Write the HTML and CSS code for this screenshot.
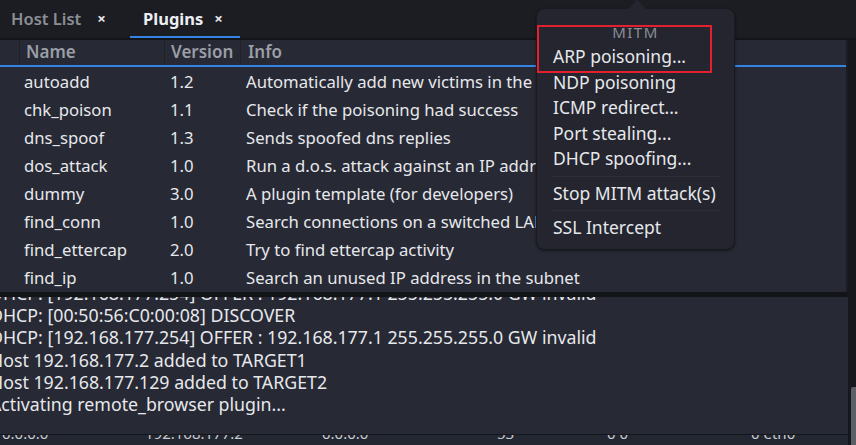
FILE: index.html
```html
<!DOCTYPE html>
<html>
<head>
<meta charset="utf-8">
<link rel="stylesheet" href="styles.css">
</head>
<body>
<div class="app">
  <div class="tabs">
    <div class="tab"><span class="tab-label">Host List</span><span class="tab-close">×</span></div>
    <div class="tab active"><span class="tab-label">Plugins</span><span class="tab-close">×</span></div>
  </div>
  <div class="sep-top"></div>
  <div class="main">
    <div class="content">
      <div class="plugins">
        <div class="thead">
          <div class="c0"></div>
          <div class="c1">Name</div>
          <div class="c2">Version</div>
          <div class="c3">Info</div>
        </div>
        <div class="tbody">
          <div class="row"><span class="c1">autoadd</span><span class="c2">1.2</span><span class="c3">Automatically add new victims in the target range</span></div>
          <div class="row"><span class="c1">chk_poison</span><span class="c2">1.1</span><span class="c3">Check if the poisoning had success</span></div>
          <div class="row"><span class="c1">dns_spoof</span><span class="c2">1.3</span><span class="c3">Sends spoofed dns replies</span></div>
          <div class="row"><span class="c1">dos_attack</span><span class="c2">1.0</span><span class="c3">Run a d.o.s. attack against an IP address</span></div>
          <div class="row"><span class="c1">dummy</span><span class="c2">3.0</span><span class="c3">A plugin template (for developers)</span></div>
          <div class="row"><span class="c1">find_conn</span><span class="c2">1.0</span><span class="c3">Search connections on a switched LAN</span></div>
          <div class="row"><span class="c1">find_ettercap</span><span class="c2">2.0</span><span class="c3">Try to find ettercap activity</span></div>
          <div class="row"><span class="c1">find_ip</span><span class="c2">1.0</span><span class="c3">Search an unused IP address in the subnet</span></div>
        </div>
      </div>
      <div class="sep-mid"></div>
      <div class="log">
        <div class="log-lines">
          <div>DHCP: [192.168.177.254] OFFER : 192.168.177.1 255.255.255.0 GW invalid</div>
          <div>DHCP: [00:50:56:C0:00:08] DISCOVER</div>
          <div>DHCP: [192.168.177.254] OFFER : 192.168.177.1 255.255.255.0 GW invalid</div>
          <div>Host 192.168.177.2 added to TARGET1</div>
          <div>Host 192.168.177.129 added to TARGET2</div>
          <div>Activating remote_browser plugin...</div>
        </div>
      </div>
      <div class="bottom">
        <span class="b1">0.0.0.0</span><span class="b2">192.168.177.2</span><span class="b3">0.0.0.0</span><span class="b4">53</span><span class="b5">0 0</span><span class="b6">0 eth0</span>
      </div>
    </div>
    <div class="rail"><div class="thumb"></div></div>
  </div>

  <div class="menu">
    <div class="menu-arrow"></div>
    <div class="menu-title">MITM</div>
    <div class="menu-item">ARP poisoning...</div>
    <div class="menu-item">NDP poisoning</div>
    <div class="menu-item">ICMP redirect...</div>
    <div class="menu-item">Port stealing...</div>
    <div class="menu-item">DHCP spoofing...</div>
    <div class="menu-sep"></div>
    <div class="menu-item">Stop MITM attack(s)</div>
    <div class="menu-sep"></div>
    <div class="menu-item">SSL Intercept</div>
    <div class="highlight"></div>
  </div>
</div>
</body>
</html>
```

FILE: styles.css
```css
* { box-sizing: border-box; }
html, body { margin: 0; padding: 0; }
body {
  width: 856px;
  height: 445px;
  overflow: hidden;
  background: #1c1d22;
  font-family: "Noto Sans", "DejaVu Sans", sans-serif;
  font-size: 16.7px;
  color: #e6e8ec;
}
.app {
  position: relative;
  width: 856px;
  height: 445px;
  display: flex;
  flex-direction: column;
}
.tabs {
  height: 38px;
  background: #1c1d22;
  display: flex;
  align-items: stretch;
}
.tab {
  display: flex;
  align-items: center;
  height: 38px;
  padding-bottom: 2px;
}
.tab:first-child { padding-left: 11px; width: 130px; }
.tab.active {
  width: 110px;
  padding-left: 13px;
  border-bottom: 2px solid #3584e4;
  padding-bottom: 0;
}
.tab-label { color: #8b8e95; font-weight: 600; font-size: 16.5px; }
.tab.active .tab-label { color: #eceef2; font-weight: 700; }
.tab-close { color: #e8e8ea; font-size: 15px; font-weight: 700; }
.tab:first-child .tab-close { margin-left: 16px; }
.tab.active .tab-close { margin-left: 11px; }
.sep-top { height: 2px; background: #131418; }
.main {
  display: flex;
  height: 405px;
}
.content {
  width: 848px;
  display: flex;
  flex-direction: column;
}
.plugins {
  height: 252px;
  width: 846px;
  background: #272934;
  overflow: hidden;
}
.thead {
  display: flex;
  height: 27px;
  border-bottom: 2px solid #3584e4;
  color: #9a9ea6;
  font-weight: 600;
  font-size: 17px;
  align-items: stretch;
}
.thead > div {
  display: flex;
  align-items: center;
  padding-bottom: 2px;
}
.thead .c0 { width: 20px; border-right: 1px solid #20222b; }
.thead .c1 { width: 145px; padding-left: 6px; border-right: 1px solid #20222b; }
.thead .c2 { width: 76px; padding-left: 6px; border-right: 1px solid #20222b; }
.thead .c3 { padding-left: 7px; }
.row {
  display: flex;
  height: 28px;
  align-items: center;
  white-space: nowrap;
}
.row .c1 { width: 165px; padding-left: 24px; flex: none; }
.row .c2 { width: 77px; padding-left: 5px; flex: none; }
.row .c3 { padding-left: 4px; }
.sep-mid {
  height: 5px;
  background: #131418;
  width: 848px;
}
.log {
  height: 138px;
  width: 848px;
  background: #272934;
  overflow: hidden;
  border-bottom: 1px solid #15161b;
  font-size: 17.75px;
}
.log-lines {
  margin-top: -15px;
  margin-left: -10px;
  line-height: 22.2px;
  white-space: nowrap;
}
.rail {
  width: 8px;
  background: #17181d;
  display: flex;
  flex-direction: column;
  justify-content: flex-end;
  align-items: flex-end;
}
.thumb {
  width: 5px;
  height: 58px;
  background: #5c5f66;
  border-radius: 2px 0 0 0;
}
.bottom {
  height: 10px;
  background: #232731;
  overflow: hidden;
  position: relative;
  white-space: nowrap;
  color: #c9ccd2;
  line-height: 16px;
  font-size: 15px;
}
.bottom span { position: absolute; top: -10px; }
.b1 { left: 2px; }
.b2 { left: 145px; }
.b3 { left: 322px; }
.b4 { left: 497px; }
.b5 { left: 607px; }
.b6 { left: 751px; }

.menu {
  position: absolute;
  left: 536px;
  top: 8px;
  width: 199px;
  height: 242px;
  background: #24252e;
  border: 1px solid #1a1b21;
  border-radius: 9px;
  box-shadow: 0 1px 3px rgba(0,0,0,0.5);
  padding: 12px 0 0 0;
  font-size: 17.5px;
}
.menu-arrow {
  position: absolute;
  top: -9px;
  left: 91px;
  width: 0;
  height: 0;
  border-left: 9px solid transparent;
  border-right: 9px solid transparent;
  border-bottom: 9px solid #24252e;
}
.menu-title {
  text-align: center;
  color: #8a8d94;
  font-size: 15px;
  letter-spacing: 1.5px;
  height: 23px;
  line-height: 22px;
  overflow: hidden;
}
.menu-item {
  padding-left: 16px;
  height: 25.5px;
  line-height: 25px;
  white-space: nowrap;
}
.menu-sep {
  height: 1px;
  background: #2c2e37;
  margin: 4px 14px 4px 14px;
}
.highlight {
  position: absolute;
  left: 0;
  top: 16px;
  width: 175px;
  height: 48px;
  border: 2px solid #e3202f;
}
```
